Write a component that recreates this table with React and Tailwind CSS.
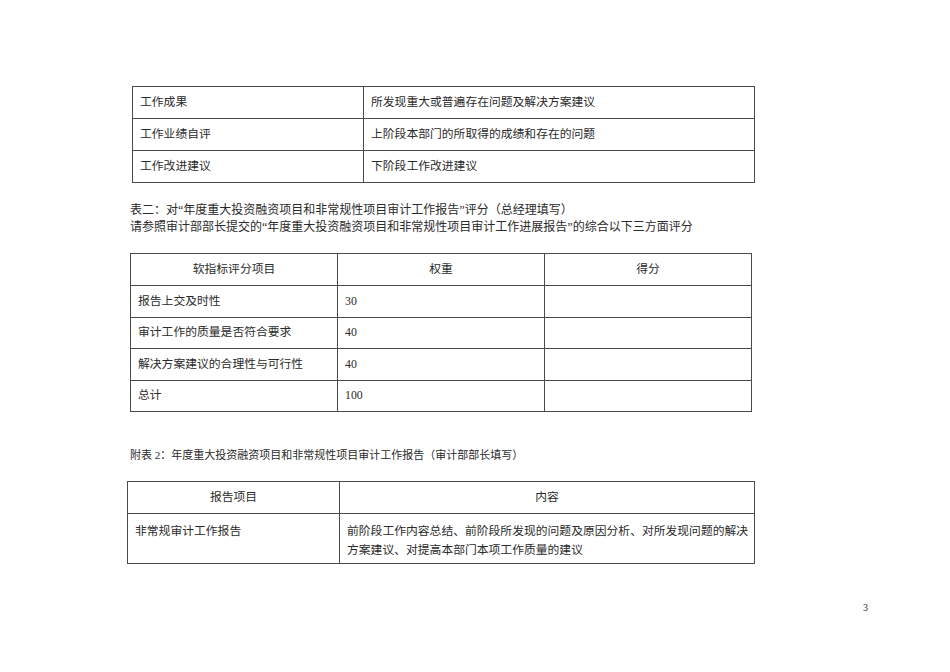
import React from 'react';

const font = { fontFamily: '"Liberation Serif", "Noto Sans CJK SC", serif' };

const cell = 'border border-[#4a4a4a] px-[7px] align-middle';

export default function App() {
    return (
        <div className="w-[950px] h-[672px] bg-white text-[#2a2a2a] text-[11.8px]" style={font}>
            <div className="pt-[86px]">
                {/* work results table */}
                <table className="ml-[132px] w-[623px] border-collapse table-fixed">
                    <colgroup>
                        <col className="w-[231px]" />
                        <col />
                    </colgroup>
                    <tbody>
                        <tr className="h-[32px]">
                            <td className={cell}>工作成果</td>
                            <td className={cell}>所发现重大或普遍存在问题及解决方案建议</td>
                        </tr>
                        <tr className="h-[32px]">
                            <td className={cell}>工作业绩自评</td>
                            <td className={cell}>上阶段本部门的所取得的成绩和存在的问题</td>
                        </tr>
                        <tr className="h-[32px]">
                            <td className={cell}>工作改进建议</td>
                            <td className={cell}>下阶段工作改进建议</td>
                        </tr>
                    </tbody>
                </table>

                <div className="ml-[130px] mt-[19px] text-[12px] leading-[17px]">
                    <p>表二：对“年度重大投资融资项目和非常规性项目审计工作报告”评分（总经理填写）</p>
                    <p>请参照审计部部长提交的“年度重大投资融资项目和非常规性项目审计工作进展报告”的综合以下三方面评分</p>
                </div>

                {/* soft indicator scoring */}
                <table className="ml-[130px] mt-[17px] w-[622px] border-collapse table-fixed">
                    <colgroup>
                        <col className="w-[207px]" />
                        <col className="w-[207px]" />
                        <col />
                    </colgroup>
                    <tbody>
                        <tr className="h-[32px]">
                            <td className={cell + ' text-center'}>软指标评分项目</td>
                            <td className={cell + ' text-center'}>权重</td>
                            <td className={cell + ' text-center'}>得分</td>
                        </tr>
                        <tr className="h-[32px]">
                            <td className={cell}>报告上交及时性</td>
                            <td className={cell}>30</td>
                            <td className={cell}></td>
                        </tr>
                        <tr className="h-[31px]">
                            <td className={cell}>审计工作的质量是否符合要求</td>
                            <td className={cell}>40</td>
                            <td className={cell}></td>
                        </tr>
                        <tr className="h-[32px]">
                            <td className={cell}>解决方案建议的合理性与可行性</td>
                            <td className={cell}>40</td>
                            <td className={cell}></td>
                        </tr>
                        <tr className="h-[31px]">
                            <td className={cell}>总计</td>
                            <td className={cell}>100</td>
                            <td className={cell}></td>
                        </tr>
                    </tbody>
                </table>

                <p className="ml-[130px] mt-[35px] text-[11px] leading-[17px]">
                    附表 2：年度重大投资融资项目和非常规性项目审计工作报告（审计部部长填写）
                </p>

                {/* report items */}
                <table className="ml-[127px] mt-[17px] w-[628px] border-collapse table-fixed">
                    <colgroup>
                        <col className="w-[212px]" />
                        <col />
                    </colgroup>
                    <tbody>
                        <tr className="h-[32px]">
                            <td className={cell + ' text-center'}>报告项目</td>
                            <td className={cell + ' text-center'}>内容</td>
                        </tr>
                        <tr className="h-[50px]">
                            <td className="border border-[#4a4a4a] px-[7px] pt-[8px] align-top leading-[19px]">非常规审计工作报告</td>
                            <td className="border border-[#4a4a4a] pl-[7px] pr-[2px] pt-[8px] align-top leading-[19px] whitespace-nowrap">
                                前阶段工作内容总结、前阶段所发现的问题及原因分析、对所发现问题的解决
                                <br />
                                方案建议、对提高本部门本项工作质量的建议
                            </td>
                        </tr>
                    </tbody>
                </table>

                <div className="flex justify-end pr-[82px] mt-[38px]">
                    <span className="text-[10px] leading-[12px]">3</span>
                </div>
            </div>
        </div>
    );
}
